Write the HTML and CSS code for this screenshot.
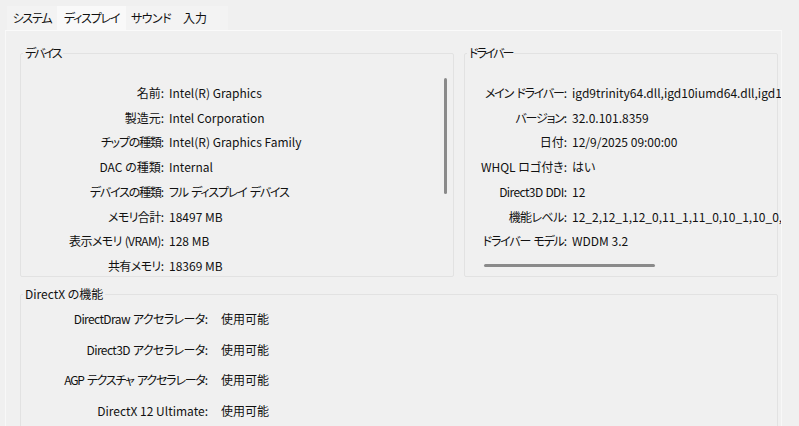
FILE: index.html
```html
<!DOCTYPE html>
<html lang="ja">
<head>
    <meta charset="UTF-8">
    <title>DirectX 診断ツール</title>
    <link rel="stylesheet" href="styles.css">
</head>
<body>
    <!-- Tab strip -->
    <div class="tabs">
        <div class="tab tight">システム</div>
        <div class="tab active tight">ディスプレイ</div>
        <div class="tab semi">サウンド</div>
        <div class="tab last">入力</div>
    </div>

    <div class="panel">
        <div class="top-row">
            <!-- Device -->
            <fieldset class="group device">
                <legend class="tighter">デバイス</legend>
                <div class="group-body">
                    <div class="props">
                        <div class="key">名前:</div><div class="val">Intel(R) Graphics</div>
                        <div class="key">製造元:</div><div class="val">Intel Corporation</div>
                        <div class="key tight">チップの種類:</div><div class="val">Intel(R) Graphics Family</div>
                        <div class="key">DAC の種類:</div><div class="val">Internal</div>
                        <div class="key tight">デバイスの種類:</div><div class="val tight">フル ディスプレイ デバイス</div>
                        <div class="key semi">メモリ合計:</div><div class="val">18497 MB</div>
                        <div class="key semi">表示メモリ (VRAM):</div><div class="val">128 MB</div>
                        <div class="key semi">共有メモリ:</div><div class="val">18369 MB</div>
                    </div>
                    <div class="vscroll"></div>
                </div>
            </fieldset>

            <!-- Driver -->
            <fieldset class="group driver">
                <legend class="tighter">ドライバー</legend>
                <div class="group-body">
                    <div class="props">
                        <div class="key tight">メイン ドライバー:</div><div class="val">igd9trinity64.dll,igd10iumd64.dll,igd10iumd64.dll,igd12umd64.dll</div>
                        <div class="key tight">バージョン:</div><div class="val">32.0.101.8359</div>
                        <div class="key">日付:</div><div class="val">12/9/2025 09:00:00</div>
                        <div class="key">WHQL ロゴ付き:</div><div class="val">はい</div>
                        <div class="key semi">Direct3D DDI:</div><div class="val">12</div>
                        <div class="key semi">機能レベル:</div><div class="val">12_2,12_1,12_0,11_1,11_0,10_1,10_0,9_3,9_2,9_1</div>
                        <div class="key tight">ドライバー モデル:</div><div class="val">WDDM 3.2</div>
                    </div>
                    <div class="hscroll"></div>
                </div>
            </fieldset>
        </div>

        <!-- DirectX features -->
        <fieldset class="group directx">
            <legend>DirectX の機能</legend>
            <div class="group-body">
                <div class="props">
                    <div class="key semi">DirectDraw アクセラレータ:</div><div class="val">使用可能</div>
                    <div class="key semi">Direct3D アクセラレータ:</div><div class="val">使用可能</div>
                    <div class="key tight">AGP テクスチャ アクセラレータ:</div><div class="val">使用可能</div>
                    <div class="key">DirectX 12 Ultimate:</div><div class="val">使用可能</div>
                </div>
            </div>
        </fieldset>
    </div>
</body>
</html>
```

FILE: styles.css
```css
body {
    margin: 0;
    background-color: #f0f0f0;
    color: #111;
    font-family: "Noto Sans CJK JP", sans-serif;
    font-size: 12px;
    font-feature-settings: "palt";
    overflow: hidden;
}
.semi {
    letter-spacing: -0.6px;
    word-spacing: 0.8px;
}
.tight {
    letter-spacing: -1.2px;
    word-spacing: 1.8px;
}
.tighter {
    letter-spacing: -2px;
}
.tabs {
    display: flex;
    margin-top: 6px;
    padding-left: 7px;
    height: 24px;
}
.tab {
    width: 50px;
    text-align: center;
    line-height: 24px;
    background-color: #f3f3f3;
}
.tab.active {
    width: 69px;
    background-color: #f9f9f9;
}
.tab.last {
    width: 45px;
    padding-left: 7px;
    text-align: left;
}
.panel {
    margin: 0 17px 0 5px;
    padding: 14px 3px 0 14px;
    border-top: 1px solid #fafafa;
    border-left: 1px solid #f8f8f8;
    border-right: 1px solid #f8f8f8;
    height: 400px;
}
.top-row {
    display: grid;
    grid-template-columns: 434px 314px;
    gap: 10px;
}
.group {
    margin: 0;
    padding: 0;
    min-width: 0;
    border: 1px solid #e2e2e2;
    border-radius: 2px;
}
.group legend {
    margin-left: 2px;
    padding: 0 2px;
    line-height: 16px;
}
.group-body {
    height: 215px;
    overflow: hidden;
}
.props {
    display: grid;
    column-gap: 5px;
    padding-top: 20px;
    line-height: 24.7px;
}
.key {
    text-align: right;
    white-space: nowrap;
}
.key.semi {
    padding-right: 0.6px;
}
.key.tight {
    padding-right: 1.2px;
}
.val {
    white-space: nowrap;
    overflow: hidden;
}
.device .group-body {
    display: flex;
}
.device .props {
    flex: 1;
    grid-template-columns: 143px 1fr;
}
.vscroll {
    width: 3px;
    height: 116px;
    margin: 17px 6px 0 0;
    background-color: #8a8a8a;
    border-radius: 2px;
}
.driver .group-body {
    overflow: visible;
}
.driver .props {
    grid-template-columns: 102px 1fr;
    margin-right: -4px;
}
.hscroll {
    width: 171px;
    height: 3px;
    margin: 10px 0 0 19px;
    background-color: #8a8a8a;
    border-radius: 2px;
}
.directx {
    margin-top: 9px;
}
.directx .group-body {
    height: 140px;
}
.directx .props {
    grid-template-columns: 187px 1fr;
    column-gap: 13px;
    padding-top: 2px;
    line-height: 30.7px;
}
```
